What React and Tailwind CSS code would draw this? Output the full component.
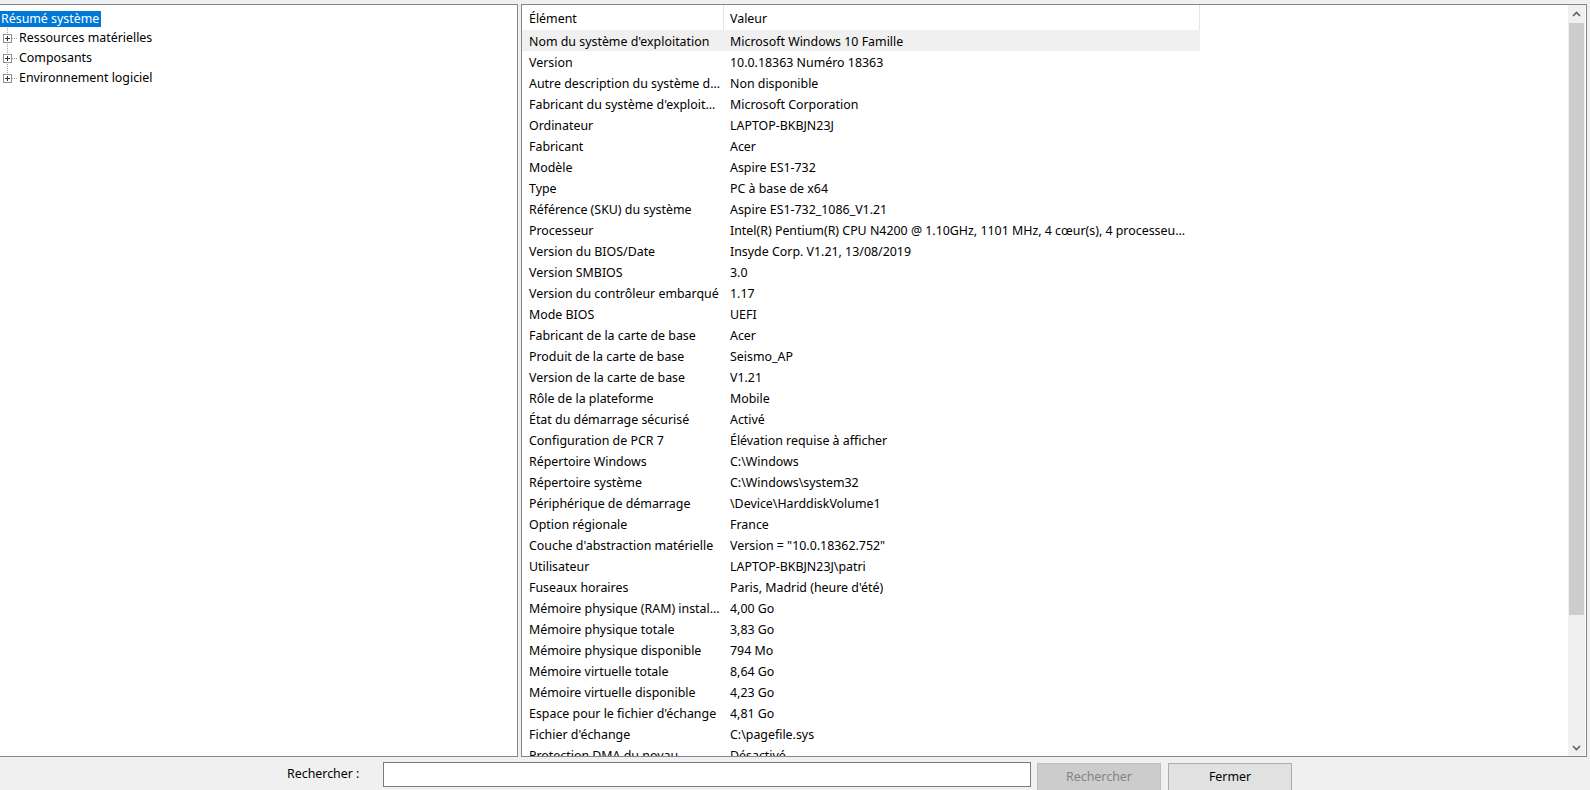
import React from "react";

const rows = [
  ["Nom du système d'exploitation", "Microsoft Windows 10 Famille"],
  ["Version", "10.0.18363 Numéro 18363"],
  ["Autre description du système d...", "Non disponible"],
  ["Fabricant du système d'exploit...", "Microsoft Corporation"],
  ["Ordinateur", "LAPTOP-BKBJN23J"],
  ["Fabricant", "Acer"],
  ["Modèle", "Aspire ES1-732"],
  ["Type", "PC à base de x64"],
  ["Référence (SKU) du système", "Aspire ES1-732_1086_V1.21"],
  ["Processeur", "Intel(R) Pentium(R) CPU N4200 @ 1.10GHz, 1101 MHz, 4 cœur(s), 4 processeu..."],
  ["Version du BIOS/Date", "Insyde Corp. V1.21, 13/08/2019"],
  ["Version SMBIOS", "3.0"],
  ["Version du contrôleur embarqué", "1.17"],
  ["Mode BIOS", "UEFI"],
  ["Fabricant de la carte de base", "Acer"],
  ["Produit de la carte de base", "Seismo_AP"],
  ["Version de la carte de base", "V1.21"],
  ["Rôle de la plateforme", "Mobile"],
  ["État du démarrage sécurisé", "Activé"],
  ["Configuration de PCR 7", "Élévation requise à afficher"],
  ["Répertoire Windows", "C:\\Windows"],
  ["Répertoire système", "C:\\Windows\\system32"],
  ["Périphérique de démarrage", "\\Device\\HarddiskVolume1"],
  ["Option régionale", "France"],
  ["Couche d'abstraction matérielle", 'Version = "10.0.18362.752"'],
  ["Utilisateur", "LAPTOP-BKBJN23J\\patri"],
  ["Fuseaux horaires", "Paris, Madrid (heure d'été)"],
  ["Mémoire physique (RAM) instal...", "4,00 Go"],
  ["Mémoire physique totale", "3,83 Go"],
  ["Mémoire physique disponible", "794 Mo"],
  ["Mémoire virtuelle totale", "8,64 Go"],
  ["Mémoire virtuelle disponible", "4,23 Go"],
  ["Espace pour le fichier d'échange", "4,81 Go"],
  ["Fichier d'échange", "C:\\pagefile.sys"],
  ["Protection DMA du noyau", "Désactivé"],
];

function TreeGutter({ last }) {
  return (
    <svg width="18" height="20" viewBox="0 0 18 20" shapeRendering="crispEdges" className="shrink-0">
      <line x1="7.5" y1="0" x2="7.5" y2={last ? 6 : 20} stroke="#a0a0a0" strokeDasharray="1 1" />
      <line x1="12" y1="10.5" x2="18" y2="10.5" stroke="#a0a0a0" strokeDasharray="1 1" />
      <rect x="3.5" y="6.5" width="8" height="8" fill="#fff" stroke="#919191" />
      <line x1="5" y1="10.5" x2="10" y2="10.5" stroke="#333" />
      <line x1="7.5" y1="8" x2="7.5" y2="13" stroke="#333" />
    </svg>
  );
}

function TreeItem({ label, last }) {
  return (
    <div className="h-[20px] flex items-center">
      <TreeGutter last={last} />
      <span className="ml-[1px] leading-[16px] text-black whitespace-nowrap">{label}</span>
    </div>
  );
}

function Chevron({ up }) {
  return (
    <svg width="9" height="6" viewBox="0 0 9 6">
      <path
        d={up ? "M1 5 L4.5 1.5 L8 5" : "M1 1 L4.5 4.5 L8 1"}
        fill="none"
        stroke="#606060"
        strokeWidth="1.6"
      />
    </svg>
  );
}

export default function App() {
  return (
    <div
      className="w-[1590px] h-[790px] overflow-hidden bg-[#f0f0f0] flex flex-col text-[12.4px] text-black"
      style={{ fontFamily: "'Noto Sans', 'Open Sans', sans-serif" }}
    >
      <div className="pt-[4px] flex">
        {/* Left tree pane */}
        <div className="w-[518px] h-[753px] bg-white border-t border-r border-b border-[#828790] pt-[4px]">
          <div className="h-[19px] flex items-center">
            <span className="bg-[#0078d7] text-white leading-[16px] pl-[1px] pr-[2px] whitespace-nowrap">
              Résumé système
            </span>
          </div>
          <TreeItem label="Ressources matérielles" />
          <TreeItem label="Composants" />
          <TreeItem label="Environnement logiciel" last />
        </div>

        <div className="w-[3px]" />

        {/* Right list pane */}
        <div className="w-[1066px] h-[753px] bg-white border border-[#828790] flex overflow-hidden">
          <div className="flex-1 overflow-hidden">
            <div className="flex h-[25px]">
              <div className="w-[202px] h-full border-r border-[#e5e5e5] pl-[7px] pt-[4px] flex items-center">Élément</div>
              <div className="w-[476px] h-full border-r border-[#e5e5e5] pl-[6px] pt-[4px] flex items-center">Valeur</div>
            </div>
            {rows.map(([k, v], i) => (
              <div
                key={i}
                className={
                  "flex h-[21px] items-start w-[678px] " + (i === 0 ? "bg-[#f0f0f0]" : "")
                }
              >
                <div className="w-[202px] pl-[7px] pt-[3px] leading-[17px] whitespace-nowrap overflow-hidden">{k}</div>
                <div className="w-[476px] pl-[6px] pt-[3px] leading-[17px] whitespace-nowrap overflow-hidden">{v}</div>
              </div>
            ))}
          </div>
          {/* Scrollbar */}
          <div className="w-[17px] bg-[#f0f0f0] flex flex-col mr-[1px]">
            <div className="h-[17px] flex items-center justify-center">
              <Chevron up />
            </div>
            <div className="flex-1">
              <div className="mt-[1px] mx-[1px] h-[592px] bg-[#cdcdcd]" />
            </div>
            <div className="h-[17px] flex items-center justify-center">
              <Chevron />
            </div>
          </div>
        </div>
      </div>

      {/* Bottom bar */}
      <div className="flex items-start pt-[5px] pl-[287px]">
        <div className="w-[72px] h-[25px] flex items-center whitespace-nowrap">Rechercher :</div>
        <div className="ml-[24px] w-[648px] h-[25px] bg-white border border-[#7a7a7a]" />
        <div className="ml-[6px] mt-[1px] w-[124px] h-[28px] bg-[#cccccc] border border-[#bfbfbf] text-[#838383] flex items-center justify-center">
          Rechercher
        </div>
        <div className="ml-[7px] mt-[1px] w-[124px] h-[28px] bg-[#e1e1e1] border border-[#adadad] flex items-center justify-center">
          Fermer
        </div>
      </div>
    </div>
  );
}
